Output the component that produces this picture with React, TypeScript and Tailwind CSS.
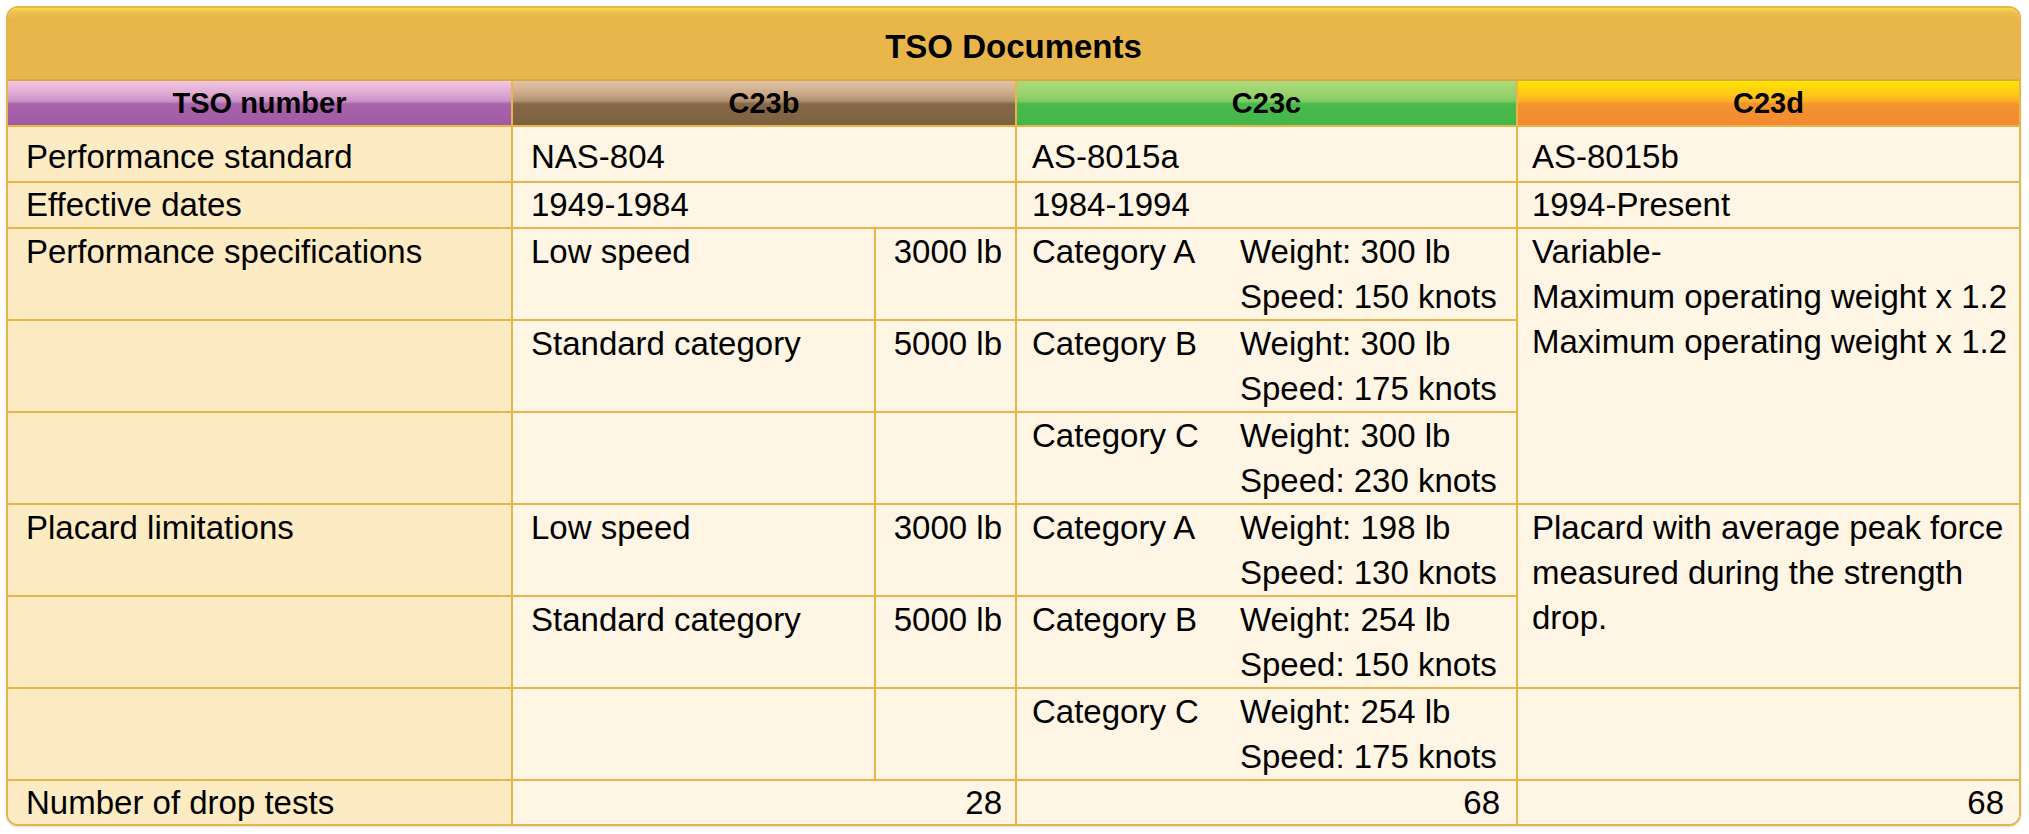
const cell = 'border-2 border-[#E8B54A] text-[33px] p-0'
// two-line rows read top down, single-line rows are centred
const td = `${cell} align-top leading-[45px]`
const one = `${cell} align-middle`
const first = 'bg-[#FDEBC3] pl-[18px]'
const body = 'bg-[#FEF5E5]'
const th = 'border-2 border-[#E8B54A] text-[29px] leading-[42px] font-bold text-center align-middle'

// glossy header fills
const purple = 'bg-[linear-gradient(to_bottom,#F2C6E2_0%,#DDA8D3_30%,#C892C4_46%,#A963AB_52%,#A05AA5_100%)]'
const brown = 'bg-[linear-gradient(to_bottom,#E2C4A6_0%,#C9A888_30%,#AE8E6C_46%,#856848_52%,#7C6241_100%)]'
const green = 'bg-[linear-gradient(to_bottom,#ADDA7A_0%,#98D26D_30%,#80CB62_46%,#4BB94D_52%,#43B649_100%)]'
const orange = 'bg-[linear-gradient(to_bottom,#FFE600_0%,#FFC81A_30%,#FBAE28_46%,#F5932F_52%,#F28A30_100%)]'

interface SpecRow {
  label: string
  b23: string
  lb: string
  cat: string
  weight: string
  speed: string
}

const specs: SpecRow[] = [
  { label: 'Performance specifications', b23: 'Low speed', lb: '3000 lb', cat: 'Category A', weight: 'Weight: 300 lb', speed: 'Speed: 150 knots' },
  { label: '', b23: 'Standard category', lb: '5000 lb', cat: 'Category B', weight: 'Weight: 300 lb', speed: 'Speed: 175 knots' },
  { label: '', b23: '', lb: '', cat: 'Category C', weight: 'Weight: 300 lb', speed: 'Speed: 230 knots' }
]

const placard: SpecRow[] = [
  { label: 'Placard limitations', b23: 'Low speed', lb: '3000 lb', cat: 'Category A', weight: 'Weight: 198 lb', speed: 'Speed: 130 knots' },
  { label: '', b23: 'Standard category', lb: '5000 lb', cat: 'Category B', weight: 'Weight: 254 lb', speed: 'Speed: 150 knots' },
  { label: '', b23: '', lb: '', cat: 'Category C', weight: 'Weight: 254 lb', speed: 'Speed: 175 knots' }
]

function SplitCells({ row }: { row: SpecRow }) {
  return (
    <>
      <td className={`${td} ${first}`}>{row.label}</td>
      <td className={`${td} ${body} pl-[18px]`}>{row.b23}</td>
      <td className={`${td} ${body} pr-[13px] text-right`}>{row.lb}</td>
      <td className={`${td} ${body} pl-[15px] [border-right-style:hidden]`}>{row.cat}</td>
      <td className={`${td} ${body} [border-left-style:hidden]`}>
        <div>{row.weight}</div>
        <div>{row.speed}</div>
      </td>
    </>
  )
}

export default function App() {
  return (
    <div className="min-h-screen bg-white p-[6px] font-['Liberation_Sans',Arial,Helvetica,sans-serif] text-black">
      <div className="w-[2015px] overflow-hidden rounded-[12px] border-2 border-[#E8B54A] shadow-[0_1px_2px_rgba(0,0,0,0.15)]">
        <table className="w-full table-fixed border-collapse border-hidden">
          <colgroup>
            <col className="w-[504px]" />
            <col className="w-[363px]" />
            <col className="w-[141px]" />
            <col className="w-[224px]" />
            <col className="w-[277px]" />
            <col className="w-[502px]" />
          </colgroup>
          <thead>
            <tr className="h-[72px]">
              <th
                colSpan={6}
                className="border-b-2 border-[#DCA646] bg-[linear-gradient(to_bottom,#F6DA48_0px,#EDBE4B_5px,#E9B64B_10px,#E8B54A_100%)] pt-[6px] text-center text-[33px] leading-[44px] font-bold"
              >
                TSO Documents
              </th>
            </tr>
            <tr className="h-[46px]">
              <th className={`${th} ${purple}`}>TSO number</th>
              <th colSpan={2} className={`${th} ${brown}`}>C23b</th>
              <th colSpan={2} className={`${th} ${green}`}>C23c</th>
              <th className={`${th} ${orange}`}>C23d</th>
            </tr>
          </thead>
          <tbody>
            <tr className="h-[56px]">
              <td className={`${one} ${first} pt-[6px] leading-[42px]`}>Performance standard</td>
              <td colSpan={2} className={`${one} ${body} pl-[18px] pt-[6px] leading-[42px]`}>NAS-804</td>
              <td colSpan={2} className={`${one} ${body} pl-[15px] pt-[6px] leading-[42px]`}>AS-8015a</td>
              <td className={`${one} ${body} pl-[14px] pt-[6px] leading-[42px]`}>AS-8015b</td>
            </tr>
            <tr className="h-[44px]">
              <td className={`${one} ${first} leading-[44px]`}>Effective dates</td>
              <td colSpan={2} className={`${one} ${body} pl-[18px] leading-[44px]`}>1949-1984</td>
              <td colSpan={2} className={`${one} ${body} pl-[15px] leading-[44px]`}>1984-1994</td>
              <td className={`${one} ${body} pl-[14px] leading-[44px]`}>1994-Present</td>
            </tr>

            {specs.map((row, i) => (
              <tr key={'s' + i} className="h-[91px]">
                <SplitCells row={row} />
                {i === 0 && (
                  <td rowSpan={3} className={`${td} ${body} pl-[14px]`}>
                    <div>Variable-</div>
                    <div>Maximum operating weight x 1.2</div>
                    <div>Maximum operating weight x 1.2</div>
                  </td>
                )}
              </tr>
            ))}

            {placard.map((row, i) => (
              <tr key={'p' + i} className="h-[91px]">
                <SplitCells row={row} />
                {i === 0 && (
                  <td rowSpan={2} className={`${td} ${body} pl-[14px] pr-[12px]`}>
                    Placard with average peak force measured during the strength drop.
                  </td>
                )}
                {i === 2 && <td className={`${td} ${body}`}></td>}
              </tr>
            ))}

            <tr className="h-[44px]">
              <td className={`${one} ${first} leading-[42px]`}>Number of drop tests</td>
              <td colSpan={2} className={`${one} ${body} pr-[13px] text-right leading-[42px]`}>28</td>
              <td colSpan={2} className={`${one} ${body} pr-[16px] text-right leading-[42px]`}>68</td>
              <td className={`${one} ${body} pr-[15px] text-right leading-[42px]`}>68</td>
            </tr>
          </tbody>
        </table>
      </div>
    </div>
  )
}
